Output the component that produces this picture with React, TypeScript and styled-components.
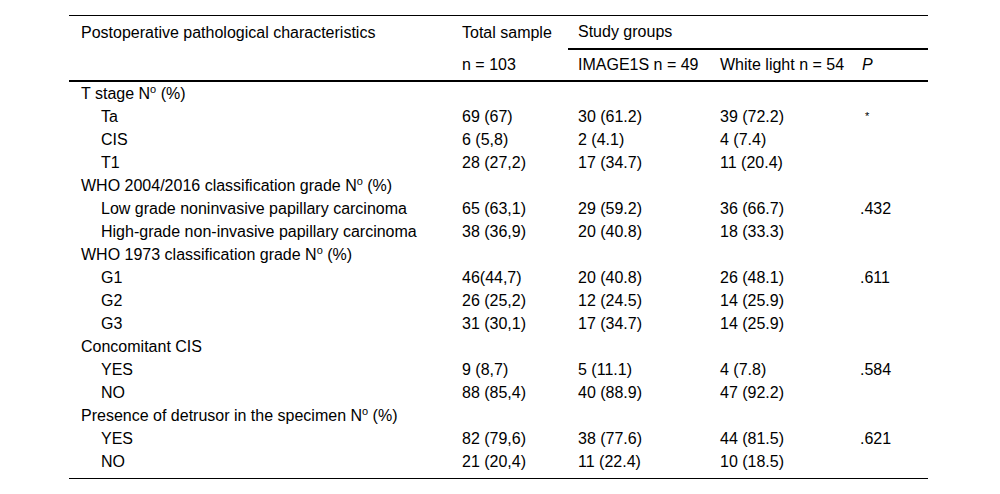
import React from 'react';
import styled, { createGlobalStyle } from 'styled-components';

type Row = {
	label: string;
	group?: boolean;
	sup?: boolean;
	total?: string;
	image?: string;
	white?: string;
	p?: string;
};

const rows: Row[] = [
	{ label: 'T stage N', group: true, sup: true },
	{ label: 'Ta', total: '69 (67)', image: '30 (61.2)', white: '39 (72.2)', p: '*' },
	{ label: 'CIS', total: '6 (5,8)', image: '2 (4.1)', white: '4 (7.4)' },
	{ label: 'T1', total: '28 (27,2)', image: '17 (34.7)', white: '11 (20.4)' },
	{ label: 'WHO 2004/2016 classification grade N', group: true, sup: true },
	{
		label: 'Low grade noninvasive papillary carcinoma',
		total: '65 (63,1)',
		image: '29 (59.2)',
		white: '36 (66.7)',
		p: '.432',
	},
	{
		label: 'High-grade non-invasive papillary carcinoma',
		total: '38 (36,9)',
		image: '20 (40.8)',
		white: '18 (33.3)',
	},
	{ label: 'WHO 1973 classification grade N', group: true, sup: true },
	{ label: 'G1', total: '46(44,7)', image: '20 (40.8)', white: '26 (48.1)', p: '.611' },
	{ label: 'G2', total: '26 (25,2)', image: '12 (24.5)', white: '14 (25.9)' },
	{ label: 'G3', total: '31 (30,1)', image: '17 (34.7)', white: '14 (25.9)' },
	{ label: 'Concomitant CIS', group: true },
	{ label: 'YES', total: '9 (8,7)', image: '5 (11.1)', white: '4 (7.8)', p: '.584' },
	{ label: 'NO', total: '88 (85,4)', image: '40 (88.9)', white: '47 (92.2)' },
	{ label: 'Presence of detrusor in the specimen N', group: true, sup: true },
	{ label: 'YES', total: '82 (79,6)', image: '38 (77.6)', white: '44 (81.5)', p: '.621' },
	{ label: 'NO', total: '21 (20,4)', image: '11 (22.4)', white: '10 (18.5)' },
];

const GlobalStyle = createGlobalStyle`
	html, body {
		margin: 0;
		padding: 0;
		background: #fff;
	}
	body {
		font-family: 'Liberation Sans', Arial, sans-serif;
		color: #000;
	}
`;

export const App = () => {
	return (
		<Page>
			<GlobalStyle />
			<Table>
				<colgroup>
					<col style={{ width: 383 }} />
					<col style={{ width: 116 }} />
					<col style={{ width: 142 }} />
					<col style={{ width: 140 }} />
					<col style={{ width: 78 }} />
				</colgroup>
				<thead>
					<HeadRow>
						<HeadCell>Postoperative pathological characteristics</HeadCell>
						<HeadCell>Total sample</HeadCell>
						<GroupCell colSpan={3}>Study groups</GroupCell>
					</HeadRow>
					<SubHeadRow>
						<SubHeadCell />
						<SubHeadCell>n = 103</SubHeadCell>
						<SubHeadCell>IMAGE1S n = 49</SubHeadCell>
						<SubHeadCell>White light n = 54</SubHeadCell>
						<SubHeadCell>
							<PLabel>P</PLabel>
						</SubHeadCell>
					</SubHeadRow>
				</thead>
				<tbody>
					{rows.map((row, idx) => (
						<BodyRow key={idx} $last={idx === rows.length - 1}>
							<LabelCell $indent={!row.group}>
								{row.label}
								{row.sup && (
									<>
										<Sup>o</Sup> (%)
									</>
								)}
							</LabelCell>
							<Cell>{row.total}</Cell>
							<Cell>{row.image}</Cell>
							<Cell>{row.white}</Cell>
							<Cell>
								{row.p === '*' ? <Star>*</Star> : row.p}
							</Cell>
						</BodyRow>
					))}
				</tbody>
			</Table>
		</Page>
	);
};

export default App;

const Page = styled.div`
	padding: 15px 0 0 69px;
`;

const Table = styled.table`
	width: 859px;
	table-layout: fixed;
	border-collapse: collapse;
	border-top: 1px solid #000;
	border-bottom: 1px solid #000;
	font-size: 16px;
	line-height: 17px;
`;

const HeadRow = styled.tr`
	height: 33px;
`;

const HeadCell = styled.th`
	text-align: left;
	font-weight: normal;
	vertical-align: middle;
	padding: 0 0 0 10px;
	white-space: nowrap;

	&:first-child {
		padding-left: 12px;
	}
`;

const GroupCell = styled(HeadCell)`
	border-bottom: 2px solid #000;
`;

const SubHeadRow = styled.tr`
	height: 32px;
`;

const SubHeadCell = styled(HeadCell)`
	border-bottom: 2px solid #000;
`;

const PLabel = styled.i`
	display: inline-block;
	margin-left: 2px;
`;

const BodyRow = styled.tr<{ $last: boolean }>`
	td {
		height: 17px;
		padding-top: 3px;
		padding-bottom: ${({ $last }) => ($last ? '8px' : '3px')};
		vertical-align: top;
	}
`;

const Cell = styled.td`
	padding-left: 10px;
	padding-right: 0;
	white-space: nowrap;
`;

const LabelCell = styled(Cell)<{ $indent: boolean }>`
	&& {
		padding-left: ${({ $indent }) => ($indent ? '32px' : '12px')};
	}
`;

const Sup = styled.sup`
	font-size: 11px;
	line-height: 0;
	vertical-align: 6px;
`;

const Star = styled.span`
	display: inline-block;
	margin-left: 5px;
	font-size: 11px;
	vertical-align: 2px;
`;
